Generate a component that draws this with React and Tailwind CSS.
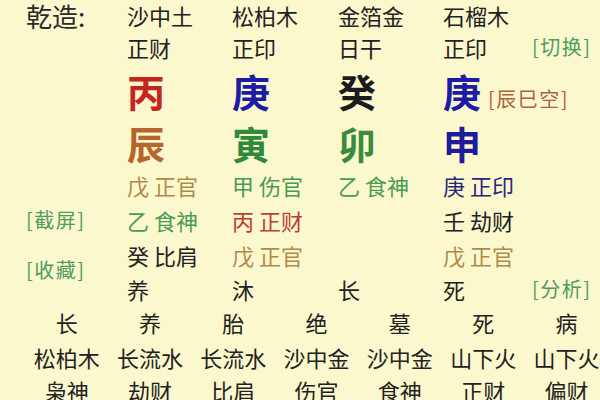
const COLS = "grid grid-cols-[105px_106px_105px_89px_1fr] items-center";

const C = {
  ink: "text-[#222222]",
  tan: "text-[#b08a4c]",
  green: "text-[#4a9a55]",
  red: "text-[#bb3f36]",
  navy: "text-[#28287e]",
  label: "text-[#4e9c62] tracking-[1.5px]",
};

// hidden stems rows: [text, color] per pillar
const HIDDEN = [
  [["戊 正官", C.tan], ["甲 伤官", C.green], ["乙 食神", C.green], ["庚 正印", C.navy]],
  [["乙 食神", C.green], ["丙 正财", C.red], null, ["壬 劫财", C.ink]],
  [["癸 比肩", C.ink], ["戊 正官", C.tan], null, ["戊 正官", C.tan]],
];

const BOTTOM = [
  ["长", "养", "胎", "绝", "墓", "死", "病"],
  ["松柏木", "长流水", "长流水", "沙中金", "沙中金", "山下火", "山下火"],
  ["枭神", "劫财", "比肩", "伤官", "食神", "正财", "偏财"],
];

const App = () => {
  return (
    <div className="w-[600px] h-[400px] overflow-hidden bg-[#fbf8cd] font-['Noto_Sans_CJK_SC','Noto_Sans',sans-serif] leading-none">
      {/* Top: chart */}
      <div className="flex">
        {/* left labels */}
        <div className="w-[127px] pl-[26px] flex flex-col">
          <div className="h-[31px] flex items-center text-[26px] leading-[30px] text-[#2a2a2a]">乾造:</div>
          <div className="mt-[171px] h-[35px] flex items-center text-[20px] text-[#4e9c62] tracking-[1.5px]">[截屏]</div>
          <div className="mt-[15px] h-[35px] flex items-center text-[20px] text-[#4e9c62] tracking-[1.5px]">[收藏]</div>
        </div>

        <div className="flex-1 text-[22px]">
          <div className={`${COLS} h-[30px] ${C.ink}`}>
            <span>沙中土</span>
            <span>松柏木</span>
            <span>金箔金</span>
            <span>石榴木</span>
          </div>
          <div className={`${COLS} h-[34px] ${C.ink}`}>
            <span>正财</span>
            <span>正印</span>
            <span>日干</span>
            <span>正印</span>
            <span className={`text-[20px] ${C.label}`}>[切换]</span>
          </div>

          {/* heavenly stems */}
          <div className={`${COLS} h-[54px] text-[38px] font-bold`}>
            <span className="text-[#c62420]">丙</span>
            <span className="text-[#1d1ca6]">庚</span>
            <span className="text-[#1c1c1c]">癸</span>
            <div className="col-span-2 flex items-baseline gap-[7px]">
              <span className="text-[#1d1ca6]">庚</span>
              <span className="text-[20px] font-normal tracking-[1.5px] text-[#b0603e]">[辰巳空]</span>
            </div>
          </div>

          {/* earthly branches */}
          <div className={`${COLS} h-[50px] text-[38px] font-bold`}>
            <span className="text-[#b6652c]">辰</span>
            <span className="text-[#2f8a3b]">寅</span>
            <span className="text-[#3a8b3c]">卯</span>
            <span className="text-[#1c1c9c]">申</span>
          </div>

          {HIDDEN.map((row, i) => (
            <div key={i} className={`${COLS} ${i === 0 ? "h-[34px]" : "h-[35px]"}`}>
              {row.map((cell, j) =>
                cell ? (
                  <span key={j} className={cell[1]}>
                    {cell[0]}
                  </span>
                ) : (
                  <span key={j} />
                )
              )}
            </div>
          ))}

          <div className={`${COLS} h-[33px] ${C.ink}`}>
            <span>养</span>
            <span>沐</span>
            <span>长</span>
            <span>死</span>
            <span className={`text-[20px] ${C.label}`}>[分析]</span>
          </div>
        </div>
      </div>

      {/* Bottom: da yun */}
      <div className="pl-[25px] text-[22px] text-[#222222]">
        {BOTTOM.map((row, i) => (
          <div
            key={i}
            className={`grid grid-cols-[repeat(7,83.3px)] items-center ${
              i === 0 ? "h-[34px]" : i === 1 ? "h-[35px]" : "h-[32px]"
            }`}
          >
            {row.map((t, j) => (
              <span key={j} className="text-center whitespace-nowrap">
                {t}
              </span>
            ))}
          </div>
        ))}
      </div>
    </div>
  );
};

export default App;
